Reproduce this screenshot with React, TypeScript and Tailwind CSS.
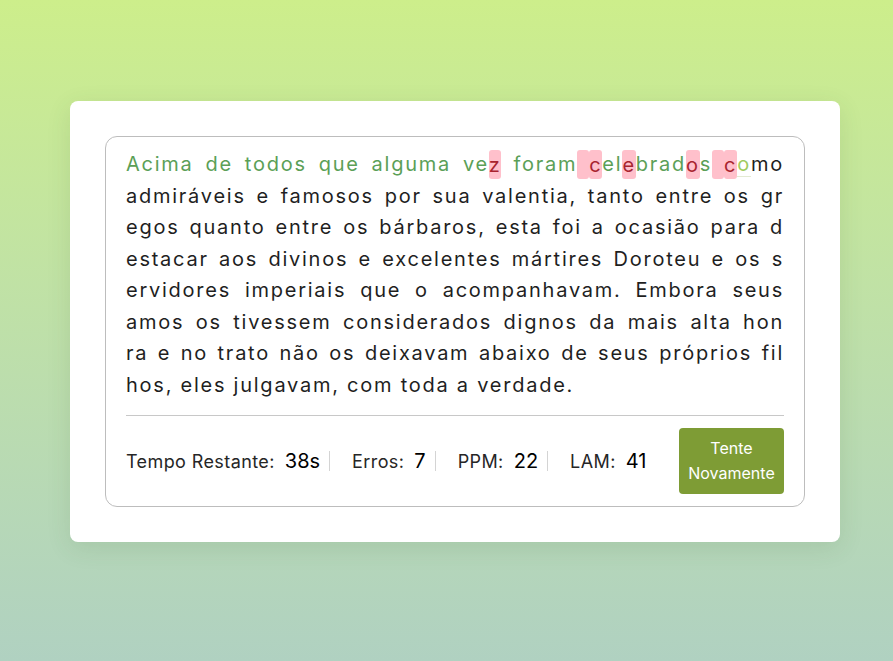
import React from 'react';

type Status = 'ok' | 'err' | 'cur' | 'todo';

const firstLine: [string, Status][] = [
  ['Acima de todos que alguma ve', 'ok'],
  ['z', 'err'],
  [' foram', 'ok'],
  [' ', 'err'],
  ['c', 'err'],
  ['el', 'ok'],
  ['e', 'err'],
  ['brad', 'ok'],
  ['o', 'err'],
  ['s', 'ok'],
  [' ', 'err'],
  ['c', 'err'],
  ['o', 'cur'],
  ['mo', 'todo'],
];

const restLines = [
  'admiráveis e famosos por sua valentia, tanto entre os gr',
  'egos quanto entre os bárbaros, esta foi a ocasião para d',
  'estacar aos divinos e excelentes mártires Doroteu e os s',
  'ervidores imperiais que o acompanhavam. Embora seus',
  'amos os tivessem considerados dignos da mais alta hon',
  'ra e no trato não os deixavam abaixo de seus próprios fil',
  'hos, eles julgavam, com toda a verdade.',
];

function Segment({ text, status }: { text: string; status: Status }) {
  if (status === 'err') {
    return (
      <span className="rounded-[3px] bg-[#ffc0cb] py-[2.5px] text-[#a8242f]">
        {text}
      </span>
    );
  }
  if (status === 'cur') {
    return <span className="border-b border-[#e3ead3] text-[#9fcb5f]">{text}</span>;
  }
  if (status === 'ok') return <span className="text-[#5b9f57]">{text}</span>;
  return <span>{text}</span>;
}

function Stat({ label, value, last }: { label: string; value: string; last?: boolean }) {
  return (
    <div className="flex items-center">
      <span className="text-[18px] tracking-[0.4px] text-[#262626]">{label}</span>
      <span className="ml-[10px] text-[20px] text-black">{value}</span>
      {!last && <span className="ml-[9px] mr-[22px] h-[20px] w-px bg-[#d4d4d4]" />}
    </div>
  );
}

export default function App() {
  return (
    <div
      className="min-h-[661px] w-full bg-gradient-to-b from-[#cdee8b] to-[#b0d1c1] pl-[70px] pt-[101px]"
      style={{ fontFamily: 'Inter, "Open Sans", sans-serif' }}
    >
      <div className="w-[770px] rounded-lg bg-white p-[35px] shadow-[0_6px_24px_rgba(60,90,40,0.12)]">
        <div className="rounded-xl border border-[#bdbdbd] px-5 pb-3 pt-3">
          <div className="whitespace-nowrap text-[20px] leading-[31.5px] tracking-[1.75px] text-[#1f1f1f]">
            <div className="[text-align-last:justify] text-justify">
              {firstLine.map(([t, s], i) =>
                s === 'err' ? (
                  t.split('').map((c, j) => <Segment key={`${i}-${j}`} text={c} status={s} />)
                ) : (
                  <Segment key={i} text={t} status={s} />
                )
              )}
            </div>
            {restLines.map((line, i) => (
              <div
                key={i}
                className={i === restLines.length - 1 ? '' : '[text-align-last:justify] text-justify'}
              >
                {line}
              </div>
            ))}
          </div>

          <div className="mt-[14px] flex items-center justify-between border-t border-[#c8c8c8] pt-3">
            <div className="flex items-center">
              <Stat label="Tempo Restante:" value="38s" />
              <Stat label="Erros:" value="7" />
              <Stat label="PPM:" value="22" />
              <Stat label="LAM:" value="41" last />
            </div>
            <button className="h-[66px] w-[105px] rounded-[4px] bg-[#7e9c35] text-[16px] leading-[25px] text-white">
              Tente
              <br />
              Novamente
            </button>
          </div>
        </div>
      </div>
    </div>
  );
}
